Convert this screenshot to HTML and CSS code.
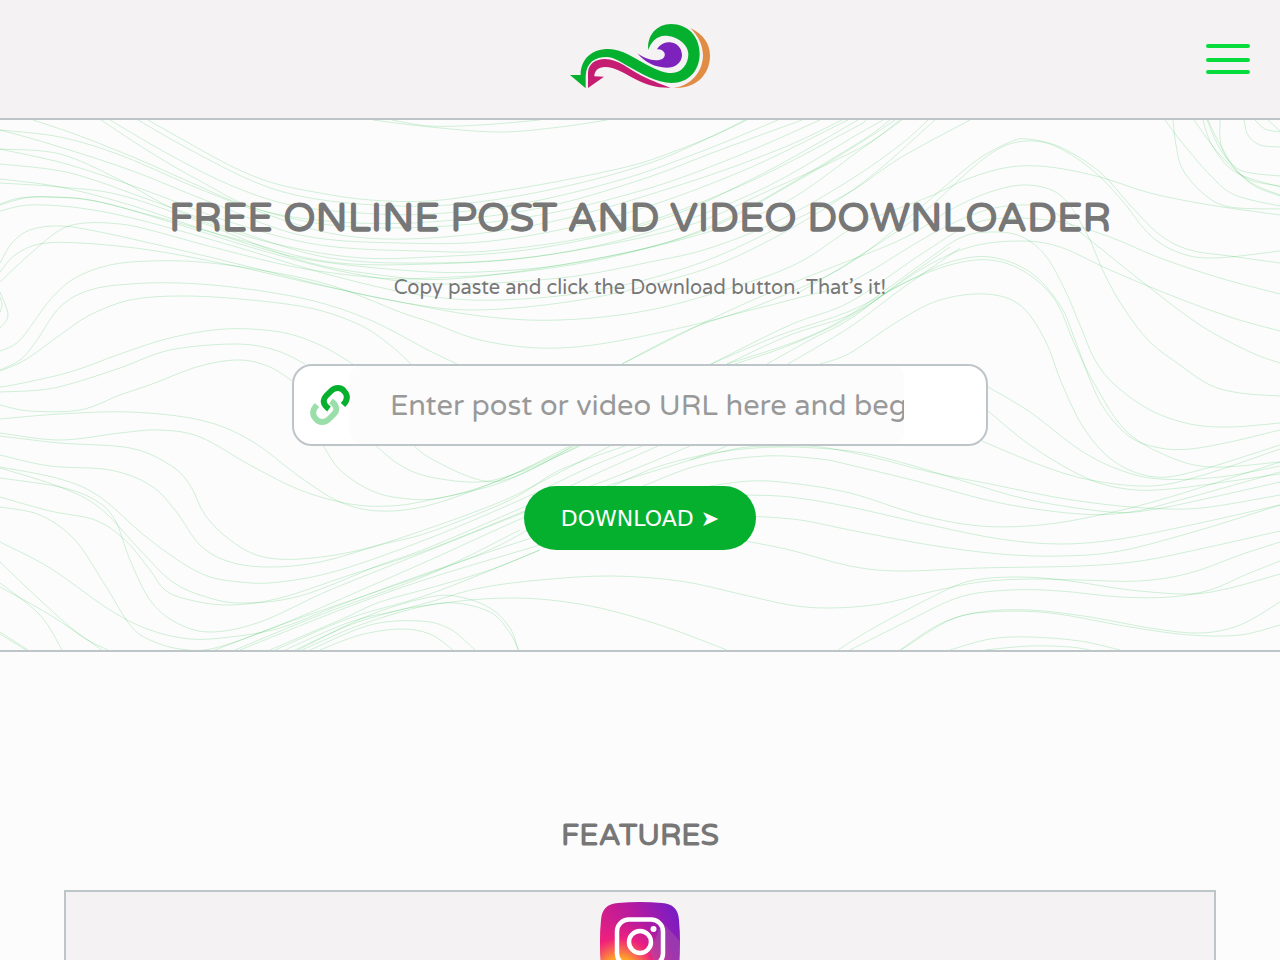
FILE: index.html
```html
<!DOCTYPE html>
<html lang="en">
<head>
<meta charset="utf-8">
<meta name="viewport" content="width=device-width, initial-scale=1">
<title>Free Online Post and Video Downloader</title>
<link rel="stylesheet" href="styles.css">
</head>
<body>
<header class="site-header">
  <a class="logo" href="#" aria-label="Home">
    <svg viewBox="30 25 420 195" aria-hidden="true">
      <path fill="#06b02f" d="M265 103C260 60 290 25 333 25C383 25 419 62 419 115C419 165 385 202 335 202C290 202 240 172 210 155C180 138 160 124 140 124C105 124 80 140 77 180V218L30 178H62C62 130 95 100 145 100C190 100 225 130 260 147C290 162 310 172 335 172C365 172 385 145 385 115C385 85 350 60 315 60C290 60 272 80 265 103Z"/>
      <path fill="#c51d72" d="M84 217V170C86 145 105 130 135 130C175 130 205 160 245 180C280 197 310 208 332 216C290 217 260 208 225 190C190 172 165 154 135 154C115 154 103 165 103 182L132 183Z"/>
      <path fill="#7d22bd" d="M232 113C255 130 285 140 307 130C323 119 312 99 291 101C300 85 315 80 330 80C352 82 366 98 366 120C364 142 345 156 320 156C285 156 255 140 232 113Z"/>
      <path fill="#e08c45" d="M391 37C430 55 450 85 450 120C450 175 410 220 340 216C390 212 428 170 429 120C429 90 415 60 391 37Z"/>
    </svg>
  </a>
  <button class="menu-button" type="button" aria-label="Open menu">
    <svg viewBox="0 0 44 30" aria-hidden="true">
      <path d="M2 2H42M2 16H42M2 28H42" stroke="#06dc3c" stroke-width="4" stroke-linecap="round"/>
    </svg>
  </button>
</header>
<main>
  <section class="hero">
    <svg class="contours" viewBox="0 120 1280 530" preserveAspectRatio="xMidYMin slice" aria-hidden="true"><path id="contour-lines"/></svg>
    <div class="hero-content">
      <h1 class="hero-title">FREE ONLINE POST AND VIDEO DOWNLOADER</h1>
      <p class="hero-text">Copy paste and click the Download button. That’s it!</p>
      <form class="download-form">
        <div class="url-field">
          <label class="url-icon" for="url" aria-label="Post or video URL">
            <svg viewBox="0 0 40 40" fill="none" stroke-width="6" aria-hidden="true">
              <path stroke="#9adfaa" transform="rotate(180 20 20)" d="M19 24C12 19 13 14 16 11L21 6C25 2 31 2 34 6C38 10 38 15 33 20"/>
              <path stroke="#06b02f" d="M19 24C12 19 13 14 16 11L21 6C25 2 31 2 34 6C38 10 38 15 33 20"/>
            </svg>
          </label>
          <input class="url-input" id="url" type="text" placeholder="Enter post or video URL here and begin download">
        </div>
        <button class="download-button" type="button">DOWNLOAD ➤</button>
      </form>
    </div>
  </section>
  <section class="features">
    <h2 class="features-title">FEATURES</h2>
    <article class="feature-card">
      <svg class="feature-icon" viewBox="0 0 80 80" role="img" aria-label="Instagram">
        <defs>
          <linearGradient id="ig-base" x1="0" y1=".5" x2="1" y2="0">
            <stop offset="0" stop-color="#e41f80"/><stop offset=".5" stop-color="#b41aa0"/><stop offset="1" stop-color="#6c1dcc"/>
          </linearGradient>
          <radialGradient id="ig-glow" cx=".25" cy=".9" r=".7">
            <stop offset="0" stop-color="#ffd51e"/><stop offset=".3" stop-color="#ffa02a"/><stop offset=".65" stop-color="#f5207b" stop-opacity=".8"/><stop offset="1" stop-color="#e0208a" stop-opacity="0"/>
          </radialGradient>
        </defs>
        <path fill="url(#ig-base)" d="M18 1Q40-1 62 1Q78 2 79 18Q81 40 79 62Q78 78 62 79Q40 81 18 79Q2 78 1 62Q-1 40 1 18Q2 2 18 1Z"/>
        <path fill="url(#ig-glow)" d="M18 1Q40-1 62 1Q78 2 79 18Q81 40 79 62Q78 78 62 79Q40 81 18 79Q2 78 1 62Q-1 40 1 18Q2 2 18 1Z"/>
        <path fill="#a55aa8" opacity=".45" d="M62 20L80 39V62Q78 78 62 79L50 50Z"/>
        <g fill="none" stroke="#fff" stroke-width="4.5">
          <rect x="17" y="17.500" width="46" height="46" rx="12"/>
          <circle cx="40" cy="40" r="11"/>
        </g>
        <circle cx="53.5" cy="27" r="3" fill="#fff"/>
      </svg>
    </article>
  </section>
</main>
<script src="contours.js"></script>
</body>
</html>
```
FILE: styles.css
```css
* {
  box-sizing: border-box;
}

body {
  margin: 0;
  background: #fcfcfc;
  color: #777;
  font-family: "Varela Round", "Noto Sans", sans-serif;
}

.site-header {
  display: grid;
  grid-template-columns: 1fr auto 1fr;
  align-items: center;
  min-height: 120px;
  padding: 0 30px;
  background: #f5f2f4;
  border-bottom: 2px solid #bdc5c9;
}

.logo {
  grid-column: 2;
  width: 140px;
  margin-bottom: 6px;
}

.logo svg,
.menu-button svg,
.url-icon svg {
  display: block;
  width: 100%;
}

.menu-button {
  justify-self: end;
  width: 44px;
  padding: 0;
  border: 0;
  background: none;
  cursor: pointer;
}

.hero {
  position: relative;
  border-bottom: 2px solid #bdc5c9;
}

.contours {
  position: absolute;
  inset: 0;
  width: 100%;
  height: 100%;
  fill: none;
  stroke: #06b02f;
  stroke-opacity: 0.18;
}

.hero-content {
  position: relative;
  padding: 70px 24px 100px;
  text-align: center;
}

.hero-title {
  margin: 0;
  font-size: 40px;
  line-height: 56px;
  font-weight: 700;
}

.hero-text {
  margin: 28px 0 62px;
  font-size: 20px;
  line-height: 28px;
}

.download-form {
  display: flex;
  flex-direction: column;
  align-items: center;
  gap: 40px;
}

.url-field {
  display: flex;
  align-items: center;
  width: 100%;
  max-width: 696px;
  padding-left: 16px;
  background: #fff;
  border: 2px solid #bdc5c9;
  border-radius: 20px;
}

.url-icon {
  flex: none;
  width: 40px;
}

.url-input {
  width: 82%;
  height: 78px;
  padding: 0 0 0 40px;
  border: 0;
  border-radius: 10px;
  background: #fcfcfc;
  color: #777;
  font: inherit;
  font-size: 29px;
}

.url-input::placeholder {
  color: #999;
}

.download-button {
  min-width: 232px;
  height: 64px;
  padding: 0 36px;
  border: 0;
  border-radius: 32px;
  background: #06b02f;
  color: #fff;
  font-family: "DejaVu Sans", sans-serif;
  font-size: 22px;
  cursor: pointer;
}

.features {
  padding: 162px 5% 80px;
  text-align: center;
}

.features-title {
  margin: 0 0 32px;
  font-size: 30px;
  line-height: 44px;
  font-weight: 700;
}

.feature-card {
  padding: 10px;
  background: #f5f2f4;
  border: 2px solid #bdc5c9;
}

.feature-icon {
  display: block;
  width: 80px;
  margin: 0 auto;
}
```
FILE: contours.js
```js
// Each row is one contour line, as x,y points joined by a smooth curve.
const contours = `
148,120 187,142 233,167 273,183 320,193 370,200 430,201 490,193 560,181 630,166 670,153 713,136 747,120
138,120 187,148 250,180 300,196 360,204 430,206 500,199 580,183 650,163 700,142 745,120
110,120 170,155 230,185 290,205 360,213 430,214 520,204 620,180 700,152 778,120
101,120 150,152 200,181 260,210 340,222 430,222 540,208 640,180 720,150 802,120
33,120 80,136 140,160 190,182 250,207 330,225 430,227 540,215 650,188 740,155 820,120
0,130 60,137 120,155 190,185 260,212 340,235 430,238 550,222 680,185 780,149 842,120
0,130 50,144 130,170 210,202 300,235 400,243 500,240 620,215 740,172 848,120
0,149 60,154 120,180 180,212 260,240 350,257 430,257 540,248 660,220 760,175 858,120
0,149 70,165 150,192 230,222 320,245 420,251 500,250 620,230 740,186 850,130 866,120
0,164 70,173 150,200 240,232 330,258 430,263 540,256 650,232 760,190 860,133 883,120
0,179 60,187 130,205 220,235 300,258 400,270 480,272 580,262 700,232 790,185 860,143 895,120
0,183 60,187 120,195 200,222 300,260 380,275 450,279 560,265 680,240 780,205 860,150 902,120
0,204 20,198 50,197 90,200 150,215 240,240 330,262 430,264 540,256 680,228 770,190 860,148 900,120
0,205 25,198 50,197 100,202 180,225 260,250 350,273 440,284 560,278 650,262 710,248 780,220 850,180 900,145 928,120
0,211 30,205 80,208 140,220 240,248 330,275 420,295 500,300 600,290 700,263 790,222 850,192 900,158 970,120
0,263 12,243 30,230 60,226 100,232 180,250 250,267 330,287 400,302 470,310 560,303 650,285 740,255 850,192 935,120
0,272 15,255 40,244 80,243 150,250 230,265 310,283 390,300 480,316 560,320 650,310 740,285 800,262 858,225 926,198 970,178 1010,167 1050,167 1100,177 1150,193 1210,205 1280,215
0,282 30,254 60,230 85,223 120,224 150,230 220,249 300,268 380,278 430,278 520,272 620,255 720,222 850,148 890,120
0,351 20,340 50,300 75,278 110,265 150,261 200,262 260,270 330,285 400,312 430,322 480,340 540,348 600,344 680,328 740,312 800,288 850,263 900,225 950,182 980,158 1010,142 1027,139 1060,147 1100,172 1130,205 1160,235 1190,250 1230,256 1280,263
0,370 20,360 35,343 60,307 90,290 130,284 180,283 240,288 310,300 370,320 430,351 457,364
0,371 25,360 60,335 90,315 130,300 180,296 240,299 310,308 360,325 390,345 411,364
0,387 18,384 70,372 120,354 170,338 225,329 280,332 320,345 353,364
0,392 40,390 70,384 120,368 170,350 235,344 275,350 305,364
0,405 30,411 80,410 120,395 152,384 200,366 240,360 270,367 292,381
0,292 8,315 0,328
0,297 2,305 0,312
323,445 340,470 370,490 400,498 440,498 500,480 570,446
375,445 400,465 430,477 480,482 520,472 560,455 580,446
413,445 430,458 470,477 500,481 540,465 572,446
0,419 60,414 130,412 200,420 250,440 300,477 340,502 380,511 430,505 500,480 575,446
0,433 60,440 120,433 160,430 200,437 250,465 300,490 350,504 390,506 430,500 500,483 560,455 578,446
0,436 60,443 130,448 170,465 190,485 205,515 230,540 260,556 300,559 360,550 430,528 500,502 545,480 610,446
0,455 50,466 110,470 150,485 175,510 200,545 230,562 270,567 320,562 380,545 430,532 510,500 560,470 625,446
0,467 60,479 100,497 150,540 200,573 240,582 280,582 340,570 430,538 520,500 590,467 642,446
0,468 60,487 100,508 140,550 170,580 200,595 240,603 300,596 380,565 430,547 540,500 600,472 658,446
0,478 60,487 95,500 115,520 130,560 150,600 175,622 210,632 260,622 330,590 430,550 530,510
0,497 50,511 95,520 125,540 150,570 165,590 190,600 230,605 280,598 350,575 430,549 540,505 620,475 690,446
0,507 40,515 75,540 105,585 130,625 150,640 180,649 215,648 280,625 350,595 430,560 530,515 610,485 690,460 727,446
0,542 50,568 110,610 150,630 190,639 230,637 280,628 340,605 430,572 540,535
0,562 40,600 80,635 108,650
0,583 40,615 62,650
0,587 50,615 102,650
0,632 28,650
0,634 26,650
215,650 300,618 430,573 500,545 560,510
235,650 320,615 430,574 520,530
240,650 340,610 430,578 540,545
270,650 340,620 380,602 430,588 490,570 540,550
275,650 350,618 430,594 540,550
285,650 350,622 400,610 430,602 480,588 540,580 610,576 680,581 740,594 790,605 830,608 880,604 930,592 980,582 1030,579 1080,580 1140,581 1190,573 1240,555 1280,542
295,650 350,625 400,610 430,605 470,600 510,598 550,600 600,608 660,625 727,650
298,650 370,615 430,597 460,597 490,608 510,628 518,650
302,650 360,625 420,607 455,603 490,612 508,630 519,650
310,650 370,625 420,621 450,629 475,650
320,650 360,635 400,629 430,634 453,650
690,460 740,448 780,446 820,447 872,457 930,472 990,484 1060,498 1120,506 1170,509 1210,507 1280,495
613,486 660,466 720,452 780,447 850,451 900,462 960,480 1030,500 1110,512 1150,510 1200,500 1280,482
643,486 700,465 765,456 820,459 850,465 920,482 1000,503 1080,514 1130,512 1180,500 1280,472
710,486 750,481 790,483 850,493 920,515 980,526 1040,525 1100,515 1170,497 1280,462
745,495 790,497 850,507 930,525 1000,539 1060,544 1120,539 1200,523 1280,505
750,516 800,520 850,530 930,545 1000,554 1060,556 1120,551 1200,530 1280,505
740,540 790,550 850,566 900,571 980,568 1080,566 1140,561 1200,549 1280,531
838,650 870,630 930,598 970,581 1020,577 1070,581 1130,590 1190,594 1230,588 1280,574
850,650 910,620 960,597 1010,590 1060,591 1120,597 1170,597 1210,590 1245,575 1280,561
900,650 940,624 980,612 1030,610 1090,617 1150,628 1200,633 1240,625 1280,602
901,650 950,620 990,612 1050,613 1130,627 1190,635 1240,635 1280,625
950,650 990,639 1030,637 1080,641 1120,650
985,650 1030,646 1070,647 1090,650
988,387 1030,412 1080,450 1120,470 1160,479 1220,477 1280,466
988,411 1030,445 1080,475 1120,488 1170,489 1280,474
982,441 1040,465 1090,480 1150,486 1200,476 1280,449
800,292 850,262 920,215 970,170 1000,148 1027,141 1055,146 1090,168 1120,198 1150,235 1180,253 1215,258 1280,251
622,364 720,315 800,280 900,240 950,210 990,192 1027,185 1060,195 1085,230 1105,275 1125,310 1150,342 1180,365 1210,385 1240,393 1280,396
622,364 700,325 790,300 850,282 930,235 980,212 1020,205 1050,210 1090,240 1140,280 1200,325 1250,352 1280,363
711,364 790,325 850,302 920,255 970,225 1010,218 1060,222 1110,237 1160,258 1220,278 1280,294
727,364 800,340 850,315 920,265 960,238 990,232 1020,236 1045,255 1065,290 1080,325 1095,360 1115,385 1150,410 1190,424 1230,427 1280,423
735,364 790,345 850,317 920,270 970,247 1020,241 1060,247 1110,270 1170,295 1230,317 1280,331
711,364 780,335 850,311 910,280 950,262 990,257 1030,272 1060,305 1075,340 1090,380 1105,410 1130,437 1160,448 1190,449 1230,442 1280,430
727,364 790,335 850,315 900,285 950,265 990,260 1025,272 1055,300 1075,345 1095,385 1125,430 1165,455 1210,467 1280,462
767,364 810,340 850,319 900,282 950,247
788,364 850,327 900,290 960,248
820,364 850,353 900,320 940,300 985,294 1020,305 1045,340 1062,384 1085,430 1115,462 1155,477 1200,470 1280,445
1165,120 1180,140 1210,175 1235,195 1280,206
1173,120 1176,145 1183,170 1205,195 1230,207 1280,209
1194,120 1220,155 1250,182 1280,195
1203,120 1212,145 1235,172 1280,187
1207,120 1222,152 1250,183 1280,196
1208,120 1222,148 1240,170 1280,176
1220,120 1221,145 1232,165 1250,180 1280,186
1244,120 1248,135 1260,145 1280,147
1255,120 1265,129 1280,132
1268,120 1280,131
373,120 430,127 500,132 560,127 607,120
392,120 430,126 480,125 540,120
`;

function smoothPath(points) {
  let d = `M${points[0]}`;
  for (let i = 0; i < points.length - 1; i++) {
    const p0 = points[Math.max(i - 1, 0)];
    const p1 = points[i];
    const p2 = points[i + 1];
    const p3 = points[Math.min(i + 2, points.length - 1)];
    const c1 = [p1[0] + (p2[0] - p0[0]) / 6, p1[1] + (p2[1] - p0[1]) / 6];
    const c2 = [p2[0] - (p3[0] - p1[0]) / 6, p2[1] - (p3[1] - p1[1]) / 6];
    d += `C${c1} ${c2} ${p2}`;
  }
  return d;
}

const holder = document.getElementById("contour-lines");
for (const row of contours.trim().split("\n")) {
  const line = holder.cloneNode();
  line.removeAttribute("id");
  line.setAttribute("d", smoothPath(row.split(" ").map((p) => p.split(",").map(Number))));
  holder.before(line);
}
```
